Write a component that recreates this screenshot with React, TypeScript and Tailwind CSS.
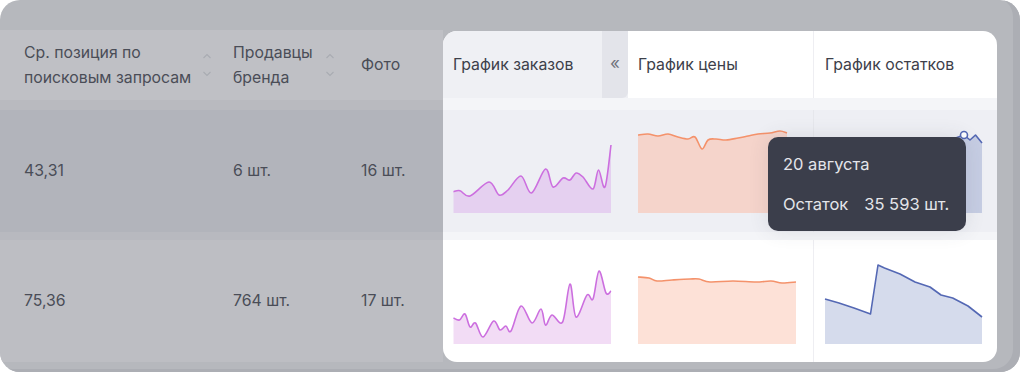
import React from "react";

type Pt = [number, number];

// catmull-rom -> cubic bezier, keeps the wavy look of the sparklines
function smooth(pts: Pt[], t = 0.5) {
  let d = `M${pts[0][0]},${pts[0][1]}`;
  for (let i = 0; i < pts.length - 1; i++) {
    const p0 = pts[i - 1] ?? pts[i];
    const p1 = pts[i];
    const p2 = pts[i + 1];
    const p3 = pts[i + 2] ?? p2;
    const c1x = p1[0] + ((p2[0] - p0[0]) / 6) * t * 2;
    const c1y = p1[1] + ((p2[1] - p0[1]) / 6) * t * 2;
    const c2x = p2[0] - ((p3[0] - p1[0]) / 6) * t * 2;
    const c2y = p2[1] - ((p3[1] - p1[1]) / 6) * t * 2;
    d += ` C${c1x},${c1y} ${c2x},${c2y} ${p2[0]},${p2[1]}`;
  }
  return d;
}

function Spark({
  box,
  pts,
  base,
  stroke,
  fill,
  curve = true,
  dot,
}: {
  box: [number, number, number, number];
  pts: Pt[];
  base: number;
  stroke: string;
  fill: string;
  curve?: boolean;
  dot?: Pt;
}) {
  const line = curve ? smooth(pts) : "M" + pts.map((p) => p.join(",")).join(" L");
  const first = pts[0];
  const last = pts[pts.length - 1];
  const area = `${line} L${last[0]},${base} L${first[0]},${base} Z`;
  return (
    <svg width={box[2]} height={box[3]} viewBox={box.join(" ")} className="block">
      <path d={area} fill={fill} />
      <path d={line} fill="none" stroke={stroke} strokeWidth={1.6} strokeLinejoin="round" />
      {dot && <circle cx={dot[0]} cy={dot[1]} r={3.5} fill="#fff" stroke={stroke} strokeWidth={1.6} />}
    </svg>
  );
}

function SortArrows() {
  return (
    <svg width="10" height="26" viewBox="0 0 10 26" className="shrink-0">
      <path d="M1.5 6 L5 2.5 L8.5 6" fill="none" stroke="#a9abb2" strokeWidth="1.1" />
      <path d="M1.5 20 L5 23.5 L8.5 20" fill="none" stroke="#a9abb2" strokeWidth="1.1" />
    </svg>
  );
}

const orders1: Pt[] = [
  [453.5, 191.7], [460, 190.7], [470, 196], [489, 182], [499, 195], [508, 190], [521, 176],
  [531.5, 193], [545.5, 169], [553, 187], [563, 178], [570, 180], [576, 173], [583, 177],
  [593, 189], [598.5, 170], [605, 187], [611, 145],
];
const orders2: Pt[] = [
  [453.5, 318], [459.5, 320], [465, 314], [470, 327], [475.5, 323], [483, 337], [493.6, 321],
  [500, 330], [505.8, 326], [511, 331], [521, 306], [532, 323], [541, 309], [545.5, 325],
  [552, 315], [562.6, 322], [570, 284], [576, 317], [587, 295], [593, 299], [599, 271],
  [606, 293], [611, 291],
];
const price1: Pt[] = [
  [638, 135], [648, 134], [658, 136], [668, 134], [678, 137], [688, 139], [695, 137],
  [702, 149], [708, 140], [716, 139], [726, 140], [738, 138], [748, 136], [758, 134],
  [770, 133], [780, 131], [787, 133],
];
const price2: Pt[] = [
  [638, 277], [649, 278], [657, 281], [672, 280], [690, 279], [699, 279], [710, 282],
  [733, 281], [756, 282], [771, 281], [782, 283], [796, 282],
];
const stock1: Pt[] = [
  [824, 170], [850, 165], [880, 158], [905, 152], [930, 146], [950, 140], [964, 135],
  [970, 140], [975.5, 135], [982, 143],
];
const stock2: Pt[] = [
  [825, 299], [839, 303], [854, 308], [870.5, 314], [878, 265], [884.5, 268], [900, 274],
  [915, 282], [930, 287], [941, 295], [952.7, 298], [968, 306], [982, 317],
];

export default function App() {
  const font = { fontFamily: "Inter, 'Noto Sans', sans-serif" };
  return (
    <div className="w-[1024px] h-[374px] bg-white" style={font}>
      <div className="w-[1020px] h-[372px] rounded-[20px] overflow-hidden bg-[#b6b8bd] pt-[30px] flex shadow-[inset_-7px_-3px_0_#acaeb4]">
        {/* dimmed table part */}
        <div className="w-[443px] flex flex-col text-[15.8px] text-[#4a4d57]">
          <div className="h-[70px] bg-[#bfc0c5] grid grid-cols-[218px_129px_96px] items-center">
            <div className="pl-6 flex items-center gap-[11px]">
              <span className="leading-[25px]">
                Ср. позиция по
                <br />
                поисковым запросам
              </span>
              <SortArrows />
            </div>
            <div className="pl-[15px] flex items-center gap-[12px]">
              <span className="leading-[25px]">
                Продавцы
                <br />
                бренда
              </span>
              <SortArrows />
            </div>
            <div className="pl-[14px]">Фото</div>
          </div>
          <div className="h-[10px] bg-[#b9babf]" />
          <div className="h-[122px] bg-[#b2b4bb] grid grid-cols-[218px_129px_96px] items-center">
            <div className="pl-6">43,31</div>
            <div className="pl-[15px]">6 шт.</div>
            <div className="pl-[14px]">16 шт.</div>
          </div>
          <div className="h-[8px] bg-[#b8b9bf]" />
          <div className="h-[122px] bg-[#bdbec3] grid grid-cols-[218px_129px_96px] items-center">
            <div className="pl-6">75,36</div>
            <div className="pl-[15px]">764 шт.</div>
            <div className="pl-[14px]">17 шт.</div>
          </div>
        </div>

        {/* highlighted charts card */}
        <div className="relative mt-px w-[554px] h-[331px] rounded-[14px] overflow-hidden bg-white text-[15.8px] text-[#3d404a]">
          <div className="h-[67px] grid grid-cols-[185px_185px_184px]">
            <div className="bg-[#eff0f4] flex items-center justify-between pl-[10px]">
              <span>График заказов</span>
              <div className="w-[26px] h-full bg-[#e3e4ea] rounded-br-[6px] flex items-center justify-center text-[#70737d] text-[17px] pb-[2px]">
                «
              </div>
            </div>
            <div className="flex items-center pl-[10px]">График цены</div>
            <div className="flex items-center pl-[11px] border-l border-[#eeeef2]">График остатков</div>
          </div>
          <div className="h-[12px] bg-[#f4f5f8]" />
          <div className="h-[122px] bg-[#eeeff4] grid grid-cols-[185px_185px_184px]">
            <Spark box={[443, 110, 185, 122]} pts={orders1} base={213} stroke="#cc6fdf" fill="#e5d0f0" />
            <Spark box={[628, 110, 185, 122]} pts={price1} base={213} stroke="#f4926b" fill="#f5d4cb" />
            <div className="border-l border-[#e6e7ec]">
              <Spark box={[814, 110, 183, 122]} pts={stock1} base={213} stroke="#5468b4" fill="#c6cde3" curve={false} dot={[964, 135]} />
            </div>
          </div>
          <div className="h-[8px] bg-[#f4f5f8]" />
          <div className="h-[122px] grid grid-cols-[185px_185px_184px]">
            <Spark box={[443, 240, 185, 122]} pts={orders2} base={344} stroke="#cc6fdf" fill="#f2dcf5" />
            <Spark box={[628, 240, 185, 122]} pts={price2} base={344} stroke="#f4926b" fill="#fde1d7" />
            <div className="border-l border-[#eeeef2]">
              <Spark box={[814, 240, 183, 122]} pts={stock2} base={344} stroke="#5468b4" fill="#d5dbec" curve={false} />
            </div>
          </div>

          {/* tooltip over the stock chart */}
          <div className="absolute left-[325px] top-[106px] w-[198px] h-[94px] rounded-[10px] bg-[#3b3e4b] text-[#e4e5ea] text-[16.5px] px-[15px] pt-[15px] shadow-[0_0_20px_rgba(60,64,80,0.12)]">
            <div className="leading-[24px]">20 августа</div>
            <div className="mt-[16px] leading-[24px] flex gap-[16px]">
              <span>Остаток</span>
              <span>35 593 шт.</span>
            </div>
          </div>
        </div>
      </div>
    </div>
  );
}
